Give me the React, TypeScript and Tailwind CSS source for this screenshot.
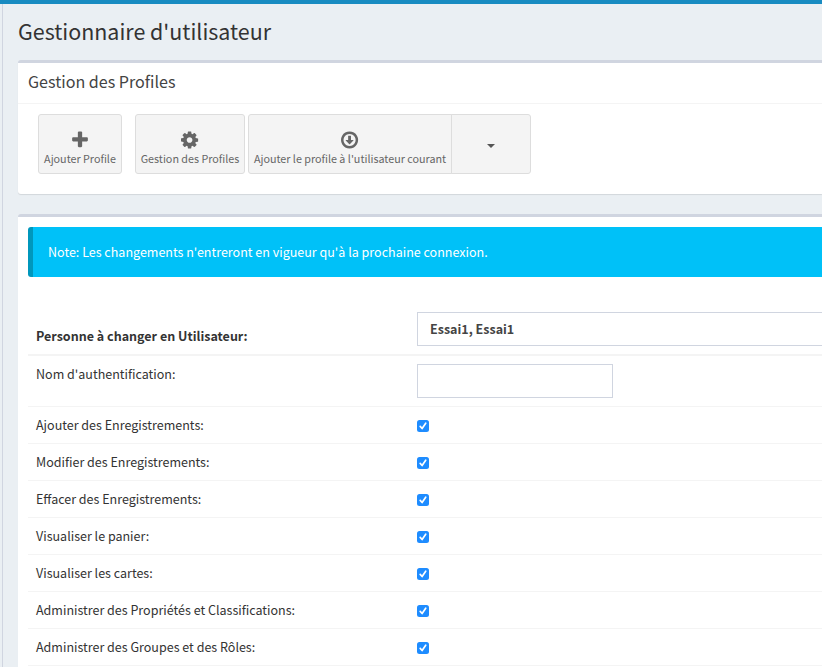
import React from "react";

const permissions = [
  "Ajouter des Enregistrements:",
  "Modifier des Enregistrements:",
  "Effacer des Enregistrements:",
  "Visualiser le panier:",
  "Visualiser les cartes:",
  "Administrer des Propriétés et Classifications:",
  "Administrer des Groupes et des Rôles:",
];

function PlusIcon() {
  return (
    <svg viewBox="0 0 1792 1792" className="h-5 w-5 shrink-0 fill-current">
      <path d="M1600 736v192q0 40-28 68t-68 28h-416v416q0 40-28 68t-68 28h-192q-40 0-68-28t-28-68v-416h-416q-40 0-68-28t-28-68v-192q0-40 28-68t68-28h416v-416q0-40 28-68t68-28h192q40 0 68 28t28 68v416h416q40 0 68 28t28 68z" />
    </svg>
  );
}

function CogIcon() {
  return (
    <svg viewBox="0 0 1536 1792" className="h-5 w-[17.14px] shrink-0 fill-current">
      <path d="M1024 896q0-106-75-181t-181-75-181 75-75 181 75 181 181 75 181-75 75-181zm512-109v222q0 12-8 23t-20 13l-185 28q-19 54-39 91 35 50 107 138 10 12 10 25t-9 23q-27 37-99 108t-94 71q-12 0-26-9l-138-108q-44 23-91 38-16 136-29 186-7 28-36 28h-222q-14 0-24.5-8.5t-11.5-21.5l-28-184q-49-16-90-37l-141 107q-10 9-25 9-14 0-25-11-126-114-165-168-7-10-7-23 0-12 8-23 15-21 51-66.5t54-70.5q-27-50-41-99l-183-27q-13-2-21-12.5t-8-23.5v-222q0-12 8-23t19-13l186-28q14-46 39-92-40-57-107-138-10-12-10-24 0-10 9-23 26-36 98.5-107.5t94.5-71.5q13 0 26 10l138 107q44-23 91-38 16-136 29-186 7-28 36-28h222q14 0 24.5 8.5t11.5 21.5l28 184q49 16 90 37l142-107q9-9 24-9 13 0 25 10 129 119 165 170 7 8 7 22 0 12-8 23-15 21-51 66.5t-54 70.5q26 50 41 98l183 28q13 2 21 12.5t8 23.5z" />
    </svg>
  );
}

function ArrowDownIcon() {
  return (
    <svg viewBox="0 0 1536 1792" className="h-5 w-[17.14px] shrink-0 fill-current">
      <path d="M1120 928q0 12-10 24l-319 319q-11 9-23 9t-23-9l-320-320q-15-16-7-35 8-20 30-20h192v-352q0-14 9-23t23-9h192q14 0 23 9t9 23v352h192q14 0 23 9t9 23zm-352-576q-148 0-273 73t-198 198-73 273 73 273 198 198 273 73 273-73 198-198 73-273-73-273-198-198-273-73zm768 544q0 209-103 385.5t-279.5 279.5-385.5 103-385.5-103-279.5-279.5-103-385.5 103-385.5 279.5-279.5 385.5-103 385.5 103 279.5 279.5 103 385.5z" />
    </svg>
  );
}

function AppButton({ icon, label, className }: { icon: React.ReactNode; label: string; className: string }) {
  return (
    <button
      className={`flex h-[60px] shrink-0 flex-col items-center border border-[#dddddd] bg-[#f4f4f4] pt-[15px] text-[#666666] ${className}`}
    >
      {icon}
      <span className="text-[10.75px] leading-[17px] whitespace-nowrap">{label}</span>
    </button>
  );
}

function Checkbox() {
  return (
    <span className="mt-0.5 flex h-3 w-3 items-center justify-center rounded-[2.5px] bg-[#1e8cff]">
      <svg viewBox="0 0 12 12" className="h-3 w-3 fill-none stroke-white" strokeWidth="1.7" strokeLinecap="round" strokeLinejoin="round">
        <path d="M3.2 6.4 5.1 8.5 8.7 3.2" />
      </svg>
    </span>
  );
}

export default function App() {
  return (
    <div className="flex h-[667px] w-[822px] flex-col overflow-hidden bg-[#eaeff3] font-['Noto_Sans_CJK_SC','Open_Sans',sans-serif] text-[12.53px] text-[#333333]">
      <div className="h-1 shrink-0 bg-[#188bc1]" />
      <div className="ml-0.5 flex min-h-0 flex-1 flex-col border-l border-[#d0d5e0] pl-[15px]">
        <h1 className="mt-[14px] h-[42px] shrink-0 text-[21.44px] leading-[26px]">Gestionnaire d'utilisateur</h1>

        <section className="h-[134px] shrink-0 rounded-tl-[3px] rounded-bl-[3px] border-t-[3px] border-[#d0d5e0] bg-white shadow-[0_1px_1px_rgba(0,0,0,0.1)]">
          <h2 className="h-[41px] border-b border-[#f4f4f4] pl-2.5 text-[16.08px] leading-[36px] text-[#444444]">
            Gestion des Profiles
          </h2>
          <div className="flex pt-2.5 pl-5">
            <AppButton icon={<PlusIcon />} label="Ajouter Profile" className="w-[84px] rounded-[3px]" />
            <AppButton icon={<CogIcon />} label="Gestion des Profiles" className="ml-[13px] w-[110px] rounded-[3px]" />
            <AppButton
              icon={<ArrowDownIcon />}
              label="Ajouter le profile à l'utilisateur courant"
              className="ml-[3px] w-[204px] rounded-l-[3px]"
            />
            <button className="-ml-px flex h-[60px] w-20 items-center justify-center rounded-r-[3px] border border-[#dddddd] bg-[#f4f4f4]">
              <span className="mt-[3px] border-x-4 border-t-4 border-x-transparent border-t-[#555555]" />
            </button>
          </div>
        </section>

        <section className="mt-5 flex min-h-0 flex-1 flex-col rounded-tl-[3px] border-t-[3px] border-[#d0d5e0] bg-white pt-2.5 pl-2.5">
          <div className="h-[50px] shrink-0 rounded-l-[3px] border-l-[5px] border-[#0097bc] bg-[#00c1f8] pl-[15px] leading-[50px] text-white">
            Note: Les changements n'entreront en vigueur qu'à la prochaine connexion.
          </div>

          <div className="mt-[35px] flex h-11 shrink-0 border-b-2 border-[#f4f4f4] pl-2 font-bold">
            <div className="w-[381px] pt-[14px] leading-5">Personne à changer en Utilisateur:</div>
            <div className="h-[34px] flex-1 border border-r-0 border-[#d0d5e0] pl-3 leading-8 text-[#444444]">Essai1, Essai1</div>
          </div>

          <div className="flex h-[51px] shrink-0 border-b border-[#f4f4f4] pt-2 pl-2">
            <label className="w-[381px] leading-5">Nom d'authentification:</label>
            <input className="h-[34px] w-[196px] border border-[#d0d5e0] bg-white outline-none" />
          </div>

          {permissions.map((label) => (
            <div key={label} className="flex h-[37px] shrink-0 items-center border-b border-[#f4f4f4] pl-2">
              <span className="w-[381px] leading-5">{label}</span>
              <Checkbox />
            </div>
          ))}
        </section>
      </div>
    </div>
  );
}
